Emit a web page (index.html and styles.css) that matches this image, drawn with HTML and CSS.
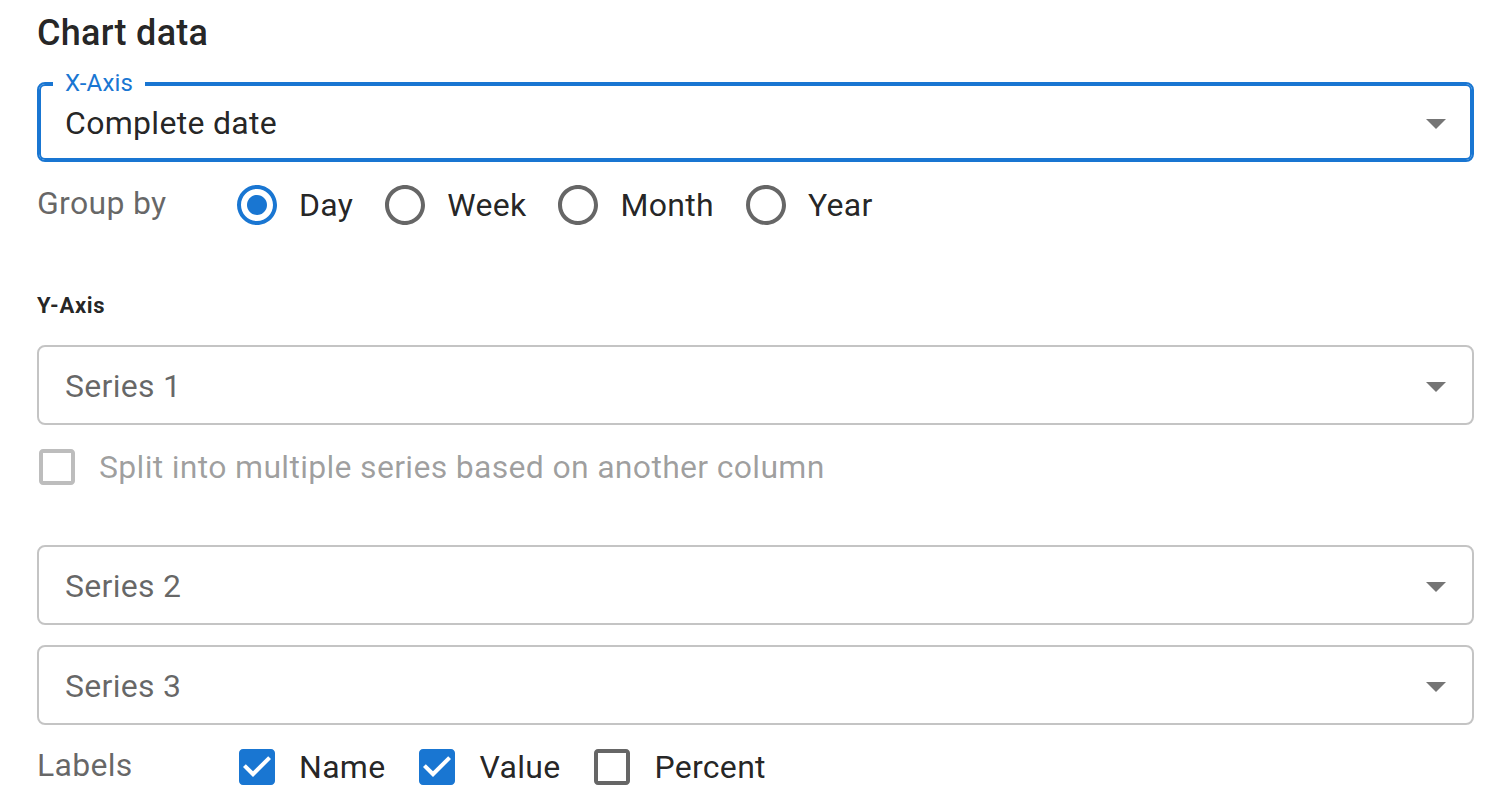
FILE: index.html
```html
<!DOCTYPE html>
<html>
<head>
  <meta charset="UTF-8">
  <meta name="viewport" content="width=device-width, initial-scale=1.0">
  <title>Chart data</title>
  <link rel="stylesheet" href="styles.css">
</head>
<body>
  <div class="panel">
    <h2 class="panel-title">Chart data</h2>

    <!-- X axis: focused select with floating label -->
    <div class="select-field focused">
      <span class="floating-label">X-Axis</span>
      <span class="select-value">Complete date</span>
      <svg class="select-arrow" viewBox="0 0 24 24"><path d="M7 10l5 5 5-5z"/></svg>
    </div>

    <div class="option-row group-row">
      <div class="row-label">Group by</div>
      <label class="option">
        <span class="option-icon checked">
          <svg viewBox="0 0 24 24"><path d="M12 2C6.48 2 2 6.48 2 12s4.48 10 10 10 10-4.48 10-10S17.52 2 12 2zm0 18c-4.42 0-8-3.58-8-8s3.58-8 8-8 8 3.58 8 8-3.58 8-8 8z"/><path d="M12 7c-2.76 0-5 2.24-5 5s2.24 5 5 5 5-2.24 5-5-2.24-5-5-5z"/></svg>
        </span>
        <span class="option-text">Day</span>
      </label>
      <label class="option">
        <span class="option-icon">
          <svg viewBox="0 0 24 24"><path d="M12 2C6.48 2 2 6.48 2 12s4.48 10 10 10 10-4.48 10-10S17.52 2 12 2zm0 18c-4.42 0-8-3.58-8-8s3.58-8 8-8 8 3.58 8 8-3.58 8-8 8z"/></svg>
        </span>
        <span class="option-text">Week</span>
      </label>
      <label class="option">
        <span class="option-icon">
          <svg viewBox="0 0 24 24"><path d="M12 2C6.48 2 2 6.48 2 12s4.48 10 10 10 10-4.48 10-10S17.52 2 12 2zm0 18c-4.42 0-8-3.58-8-8s3.58-8 8-8 8 3.58 8 8-3.58 8-8 8z"/></svg>
        </span>
        <span class="option-text">Month</span>
      </label>
      <label class="option">
        <span class="option-icon">
          <svg viewBox="0 0 24 24"><path d="M12 2C6.48 2 2 6.48 2 12s4.48 10 10 10 10-4.48 10-10S17.52 2 12 2zm0 18c-4.42 0-8-3.58-8-8s3.58-8 8-8 8 3.58 8 8-3.58 8-8 8z"/></svg>
        </span>
        <span class="option-text">Year</span>
      </label>
    </div>

    <div class="section-label">Y-Axis</div>

    <div class="select-field series-1">
      <span class="select-value placeholder">Series 1</span>
      <svg class="select-arrow" viewBox="0 0 24 24"><path d="M7 10l5 5 5-5z"/></svg>
    </div>

    <div class="option-row split-row">
      <label class="option disabled">
        <span class="option-icon">
          <svg viewBox="0 0 24 24"><path d="M19 5v14H5V5h14m0-2H5c-1.11 0-2 .9-2 2v14c0 1.1.89 2 2 2h14c1.1 0 2-.9 2-2V5c0-1.1-.9-2-2-2z"/></svg>
        </span>
        <span class="option-text">Split into multiple series based on another column</span>
      </label>
    </div>

    <div class="select-field series-2">
      <span class="select-value placeholder">Series 2</span>
      <svg class="select-arrow" viewBox="0 0 24 24"><path d="M7 10l5 5 5-5z"/></svg>
    </div>

    <div class="select-field series-3">
      <span class="select-value placeholder">Series 3</span>
      <svg class="select-arrow" viewBox="0 0 24 24"><path d="M7 10l5 5 5-5z"/></svg>
    </div>

    <div class="option-row labels-row">
      <div class="row-label">Labels</div>
      <label class="option">
        <span class="option-icon checked">
          <svg viewBox="0 0 24 24"><path d="M19 3H5c-1.11 0-2 .9-2 2v14c0 1.1.89 2 2 2h14c1.1 0 2-.9 2-2V5c0-1.1-.9-2-2-2zm-9 14l-5-5 1.41-1.41L10 14.17l7.59-7.59L19 8l-9 9z"/></svg>
        </span>
        <span class="option-text">Name</span>
      </label>
      <label class="option">
        <span class="option-icon checked">
          <svg viewBox="0 0 24 24"><path d="M19 3H5c-1.11 0-2 .9-2 2v14c0 1.1.89 2 2 2h14c1.1 0 2-.9 2-2V5c0-1.1-.9-2-2-2zm-9 14l-5-5 1.41-1.41L10 14.17l7.59-7.59L19 8l-9 9z"/></svg>
        </span>
        <span class="option-text">Value</span>
      </label>
      <label class="option">
        <span class="option-icon">
          <svg viewBox="0 0 24 24"><path d="M19 5v14H5V5h14m0-2H5c-1.11 0-2 .9-2 2v14c0 1.1.89 2 2 2h14c1.1 0 2-.9 2-2V5c0-1.1-.9-2-2-2z"/></svg>
        </span>
        <span class="option-text">Percent</span>
      </label>
    </div>
  </div>
</body>
</html>
```

FILE: styles.css
```css
* {
  margin: 0;
  padding: 0;
  box-sizing: border-box;
}

body {
  font-family: Roboto, "Liberation Sans", sans-serif;
  background: #fff;
  color: rgba(0, 0, 0, 0.87);
  letter-spacing: 0.3px;
}

.panel {
  padding: 12px 14px 0 37px;
}

.panel-title {
  font-size: 36px;
  line-height: 43px;
  font-weight: 500;
  letter-spacing: 0.27px;
}

/* outlined select */
.select-field {
  position: relative;
  display: flex;
  align-items: center;
  height: 80px;
  padding: 1px 12px 0 26px;
  border: 2px solid rgba(0, 0, 0, 0.23);
  border-radius: 8px;
}

.select-field.focused {
  margin-top: 27px;
  border-color: #1976d2;
  box-shadow: inset 0 0 0 2px #1976d2;
}

.floating-label {
  position: absolute;
  left: 14px;
  top: -13px;
  padding: 0 12px;
  background: #fff;
  color: #1976d2;
  font-size: 24px;
  line-height: 24px;
  letter-spacing: 0.2px;
}

.select-value {
  flex: 1;
  font-size: 32px;
  line-height: 40px;
}

.select-value.placeholder {
  color: rgba(0, 0, 0, 0.6);
}

.select-arrow {
  width: 48px;
  height: 48px;
  fill: rgba(0, 0, 0, 0.54);
}

.series-1 {
  margin-top: 23px;
}

.series-2 {
  margin-top: 36px;
}

.series-3 {
  margin-top: 20px;
}

/* radio and checkbox rows */
.option-row {
  display: flex;
  align-items: center;
  height: 84px;
}

.group-row {
  margin-top: 1px;
}

.row-label {
  width: 178px;
  font-size: 32px;
  line-height: 40px;
  color: rgba(0, 0, 0, 0.6);
  margin-top: -4px;
}

.option {
  display: flex;
  align-items: center;
  margin-right: 10px;
  font-size: 32px;
}

.option-icon {
  display: flex;
  padding: 18px;
}

.option-icon svg {
  width: 48px;
  height: 48px;
  fill: rgba(0, 0, 0, 0.6);
}

.option-icon.checked svg {
  fill: #1976d2;
}

.split-row .option {
  margin-left: -22px;
}

.option.disabled .option-icon svg {
  fill: rgba(0, 0, 0, 0.26);
}

.option.disabled .option-text {
  color: rgba(0, 0, 0, 0.38);
}

.section-label {
  margin-top: 43px;
  font-size: 22px;
  line-height: 32px;
  font-weight: 700;
  letter-spacing: 0.7px;
}
```
